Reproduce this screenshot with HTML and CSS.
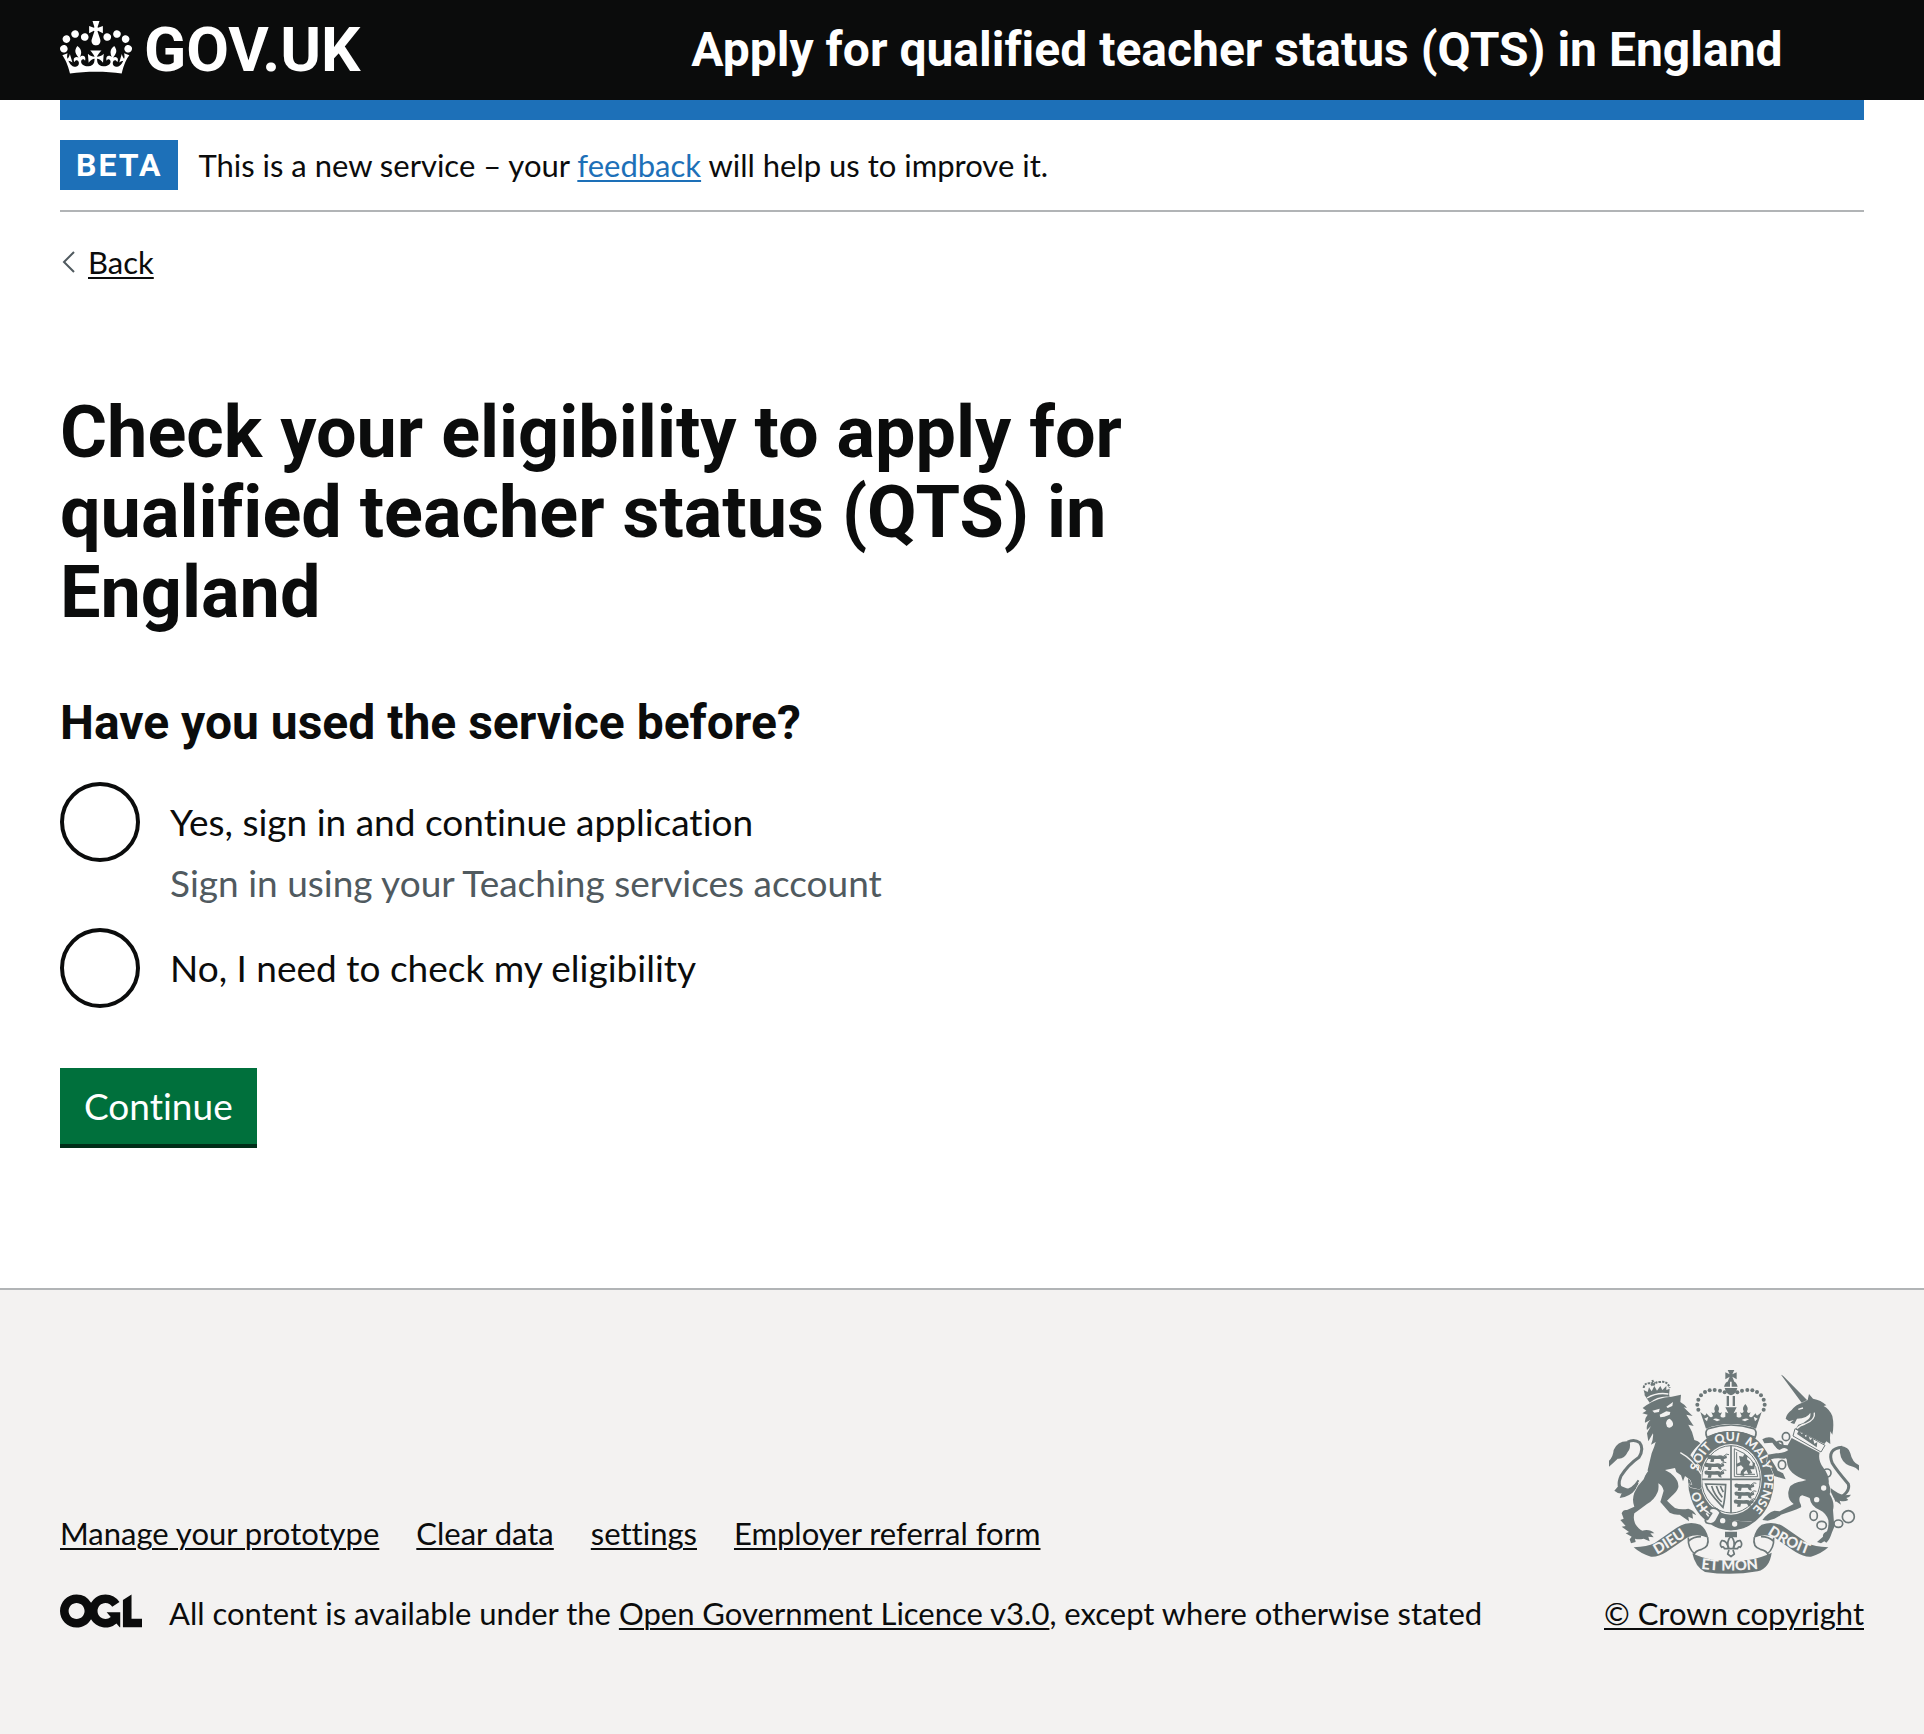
FILE: index.html
```html
<!DOCTYPE html>
<html lang="en">
<head>
<meta charset="utf-8">
<meta name="viewport" content="width=device-width, initial-scale=1">
<title>Check your eligibility – Apply for qualified teacher status (QTS) in England</title>
<link rel="stylesheet" href="styles.css">
</head>
<body>
<header class="header">
  <div class="header-row">
    <a class="logo" href="#">
      <svg class="logo-crown" viewBox="0 0 132 97" aria-hidden="true"><path fill="currentColor" fill-rule="evenodd" d="M25 30.2c3.5 1.5 7.7-.2 9.1-3.7 1.5-3.6-.2-7.8-3.9-9.2-3.6-1.4-7.6.3-9.1 3.9-1.4 3.5.3 7.5 3.9 9zM9 39.5c3.6 1.5 7.8-.2 9.2-3.7 1.5-3.6-.2-7.8-3.9-9.1-3.6-1.5-7.6.2-9.1 3.8-1.4 3.5.3 7.5 3.8 9zM4.4 57.2c3.5 1.5 7.7-.2 9.1-3.8 1.5-3.6-.2-7.7-3.9-9.1-3.5-1.5-7.6.3-9.1 3.8-1.4 3.5.3 7.6 3.9 9.1zm38.3-21.4c3.5 1.5 7.7-.2 9.1-3.8 1.5-3.6-.2-7.7-3.9-9.1-3.6-1.5-7.6.3-9.1 3.8-1.3 3.6.4 7.7 3.9 9.1zm64.4-5.6c-3.6 1.5-7.8-.2-9.1-3.7-1.5-3.6.2-7.8 3.8-9.2 3.6-1.4 7.7.3 9.2 3.9 1.3 3.5-.4 7.5-3.9 9zm15.9 9.3c-3.6 1.5-7.7-.2-9.1-3.7-1.5-3.6.2-7.8 3.7-9.1 3.6-1.5 7.7.2 9.2 3.8 1.5 3.5-.3 7.5-3.8 9zm4.7 17.7c-3.6 1.5-7.8-.2-9.2-3.8-1.5-3.6.2-7.7 3.9-9.1 3.6-1.5 7.7.3 9.2 3.8 1.3 3.5-.4 7.6-3.9 9.1zM89.3 35.8c-3.6 1.5-7.8-.2-9.2-3.8-1.4-3.6.2-7.7 3.9-9.1 3.6-1.5 7.7.3 9.2 3.8 1.4 3.6-.3 7.7-3.9 9.1zM69.7 17.7l8.9 4.7V9.3l-8.9 2.8c-.2-.3-.5-.6-.9-.9L72.4 0H59.6l3.5 11.2c-.3.3-.6.5-.9.9l-8.8-2.8v13.1l8.8-4.7c.3.3.6.7.9.9l-5 15.4v.1c-.2.8-.4 1.6-.4 2.4 0 4.1 3.1 7.5 7 8.1h.2c.3 0 .7.1 1 .1.4 0 .7 0 1-.1h.2c4-.6 7.1-4.1 7.1-8.1 0-.8-.1-1.7-.4-2.4V34l-5.1-15.4c.4-.2.7-.6 1-.9zM66 92.8c16.9 0 32.8 1.1 47.1 3.2 4-16.9 8.9-26.7 14-33.5l-9.6-3.4c1 4.9 1.1 7.2 0 10.2-1.5-1.4-3-4.3-4.2-8.7L108.6 76c2.8-2 5-3.2 7.5-3.3-4.4 9.4-10 11.9-13.6 11.2-4.3-.8-6.3-4.6-5.6-7.9 1-4.7 5.7-5.9 8-.5 4.3-8.7-3-11.4-7.6-8.8 7.1-7.2 7.9-13.5 2.1-21.1-8 6.1-8.1 12.3-4.5 20.8-4.7-5.4-12.1-2.5-9.5 6.2 3.4-5.2 7.9-2 7.2 3.1-.6 4.3-6.4 7.8-13.5 7.2-10.3-.9-10.9-8-11.2-13.8 2.5-.5 7.1 1.8 11 7.3L80.2 60c-4.1 4.4-8 5.3-12.3 5.4 1.4-4.4 8-11.6 8-11.6H55.5s6.4 7.2 7.9 11.6c-4.2-.1-8-1-12.3-5.4l1.4 16.4c3.9-5.5 8.5-7.7 10.9-7.3-.3 5.8-.9 12.8-11.1 13.8-7.2.6-12.9-2.9-13.5-7.2-.7-5 3.8-8.3 7.1-3.1 2.7-8.7-4.6-11.6-9.4-6.2 3.7-8.5 3.6-14.7-4.6-20.8-5.8 7.6-5 13.9 2.2 21.1-4.7-2.6-11.9.1-7.7 8.8 2.3-5.5 7.1-4.2 8.1.5.7 3.3-1.3 7.1-5.7 7.9-3.5.7-9-1.8-13.5-11.2 2.5.1 4.7 1.3 7.5 3.3l-4.7-15.4c-1.2 4.4-2.7 7.2-4.3 8.7-1.1-3-.9-5.3 0-10.2l-9.5 3.4c5 6.9 9.9 16.7 14 33.5 14.8-2.1 30.8-3.2 47.7-3.2z"/></svg>
      <span>GOV.UK</span>
    </a>
    <a class="service-name" href="#">Apply for qualified teacher status (QTS) in England</a>
  </div>
</header>

<div class="container">
  <div class="phase-banner">
    <strong class="tag">BETA</strong>
    <span>This is a new service – your <a class="link" href="#">feedback</a> will help us to improve it.</span>
  </div>
  <a class="back" href="#">
    <svg class="back-arrow" viewBox="0 0 16 24" aria-hidden="true"><path d="M14 2 4 12l10 10" fill="none" stroke="currentColor" stroke-width="2"/></svg>
    <span class="back-text">Back</span>
  </a>

  <main class="main">
    <h1 class="title">Check your eligibility to apply for qualified teacher status (QTS) in England</h1>
    <form>
      <fieldset class="question">
        <legend class="question-title">Have you used the service before?</legend>
        <div class="radios">
          <div class="radio-item">
            <input class="radio" type="radio" name="used" id="used-yes" value="yes" aria-describedby="used-yes-hint">
            <label class="radio-label" for="used-yes">Yes, sign in and continue application</label>
            <div class="hint" id="used-yes-hint">Sign in using your Teaching services account</div>
          </div>
          <div class="radio-item">
            <input class="radio" type="radio" name="used" id="used-no" value="no">
            <label class="radio-label" for="used-no">No, I need to check my eligibility</label>
          </div>
        </div>
      </fieldset>
      <button class="button" type="submit">Continue</button>
    </form>
  </main>
</div>

<footer class="footer">
  <div class="footer-row">
    <div class="footer-meta">
      <ul class="footer-links">
        <li><a href="#">Manage your prototype</a></li>
        <li><a href="#">Clear data</a></li>
        <li><a href="#">settings</a></li>
        <li><a href="#">Employer referral form</a></li>
      </ul>
      <div class="licence">
        <svg class="ogl" viewBox="0 0 483.2 195.7" aria-hidden="true"><path fill="currentColor" d="M421.5 142.8V.1l-50.7 32.3v161.1h112.4v-50.7zm-122.3-9.6A47.12 47.12 0 0 1 221 97.8c0-26 21.1-47.1 47.1-47.1 16.7 0 31.4 8.7 39.7 21.8l42.7-27.2A97.63 97.63 0 0 0 268.1 0c-36.5 0-68.3 20.1-85.1 49.7A98 98 0 0 0 97.8 0C43.9 0 0 43.9 0 97.8s43.9 97.8 97.8 97.8c36.5 0 68.3-20.1 85.1-49.7a97.76 97.76 0 0 0 149.6 25.4l19.4 22.2h3v-87.8h-80l24.3 27.5zM97.8 145c-26 0-47.1-21.1-47.1-47.1s21.1-47.1 47.1-47.1 47.1 21.1 47.1 47.1S123.8 145 97.8 145"/></svg>
        <span>All content is available under the <a href="#">Open Government Licence v3.0</a>, except where otherwise stated</span>
      </div>
    </div>
    <div class="copyright">
      <svg class="arms" viewBox="54 60 750 612" role="img" aria-label="Royal coat of arms">
        <defs>
          <path id="garter" d="M420 503A100 115 0 0 1 420 273A100 115 0 0 1 420 503"/>
          <path id="dieu" d="M198 614Q250 584 304 546"/>
          <path id="droit" d="M528 552Q588 592 660 616"/>
          <path id="mon" d="M330 656Q420 668 516 655"/>
          <g id="beast"><path d="M0 6Q6 0 12 4L30 5Q44 2 50 8L58 4 60 12 50 16 52 24 44 22 40 15 22 15 20 24 10 24 12 16 2 14Z"/><path d="M48 8Q60 -4 66 2" fill="none" stroke="#6c7778" stroke-width="3"/></g>
        </defs>

        <!-- garter and shield -->
        <ellipse cx="420" cy="390" rx="129" ry="151" class="ink"/>
        <ellipse cx="420" cy="388" rx="92" ry="106" class="paper"/>
        <ellipse cx="420" cy="388" rx="88" ry="101" class="line thin"/>
        <path class="line" d="M420 287V489M331 388H509"/>
        <g class="ink">
          <use href="#beast" x="348" y="312"/><use href="#beast" x="340" y="336"/><use href="#beast" x="340" y="359"/>
          <use href="#beast" x="430" y="398"/><use href="#beast" x="430" y="422"/><use href="#beast" x="428" y="446"/>
          <path d="M444 318l12 2 4-8 10 6-2 10 10 8-4 10 10 2 2-12 6 4-2 18-12 0 6 12-12 2-6-12-8 8 2 10-12-2 2-12 8-10-8-8-12 4-2-8 12-6z"/>
        </g>
        <path class="line thin" d="M430 296V380H500Q496 320 430 296M437 306V373H492"/>
        <path class="line" d="M344 402L404 404Q402 450 396 472Q372 448 350 418ZM362 408Q370 436 392 456M376 408Q382 428 394 442M388 408Q392 418 397 426"/>
        <path class="gap" d="M330 472Q390 520 482 516M346 490L366 516"/>
        <path class="ink" d="M362 484Q420 520 490 514Q450 544 410 540Q374 532 354 510Z"/>
        <circle class="paper" cx="395" cy="512" r="8"/><circle class="paper" cx="431" cy="522" r="8"/>
        <path class="buckle" d="M358 476Q350 486 362 490L350 508Q338 508 346 518 366 526 374 514L388 488Q376 470 358 476Z"/>

        <!-- imperial crown -->
        <path class="paper" d="M340 225H498L492 258Q420 228 348 258Z"/>
        <path class="line" d="M352 236Q420 214 488 236Q500 244 492 262Q420 230 348 262Q340 244 352 236Z"/>
        <path class="ink" d="M410 60H430L424 73 437 67V88L424 80 430 95H410L416 80 403 88V67L416 73ZM399 110Q402 94 417 92V110ZM422 92Q437 94 440 110H422ZM401 114H439Q434 134 420 136Q406 134 401 114ZM407 138H414V168H407ZM425 138H432V168H425Z"/>
        <g id="crown-half">
          <g class="ink"><circle cx="401" cy="127" r="6"/><circle cx="387" cy="122" r="6"/><circle cx="371" cy="120" r="6"/><circle cx="356" cy="121" r="6"/><circle cx="342" cy="126" r="6"/><circle cx="330" cy="136" r="6"/><circle cx="322" cy="149" r="6"/><circle cx="319" cy="164" r="6"/><circle cx="322" cy="179" r="6"/></g>
          <path class="ink" d="M420 172H403L412 190 403 186V200Q392 206 388 198L393 187Q384 192 382 184Q388 174 377 162Q366 174 372 184Q370 192 361 187L366 198Q360 206 354 198L346 190Q344 200 338 194L328 186 345 236Q380 222 420 222Z"/>
          <path class="paper" d="M340 206L352 200 348 214ZM366 208Q376 202 388 210L378 214Z"/>
        </g>
        <use href="#crown-half" transform="translate(840 0) scale(-1 1)"/>

        <!-- lion -->
        <g transform="translate(30 60)">
          <path class="line tail" d="M114 332Q92 366 66 362Q46 350 60 318Q82 284 114 262Q130 236 116 218Q100 206 80 216"/>
          <path class="ink" d="M86 214Q50 210 38 240Q36 262 24 272V290Q40 276 50 266Q70 268 80 246Q90 236 86 214ZM54 346L40 362Q52 372 62 370L56 384Q88 380 104 358L112 338 84 358Z"/>
          <path class="ink edge" d="M125 114L136 106Q170 82 212 80L240 74 238 96Q252 104 258 114L248 112Q262 126 275 138L256 134Q266 150 278 168L262 164Q276 186 280 210Q292 212 298 220Q276 240 268 256L298 290 302 350Q296 362 288 356L268 352 262 342 274 344 268 330 252 318 246 334 240 316 226 306 222 294 192 300Q206 306 218 318Q234 334 232 352Q228 366 210 380L198 392Q212 406 222 414Q240 420 262 416Q278 420 286 436L274 430 276 446 262 440 264 454 250 444 236 434Q222 436 206 428Q190 410 178 396Q184 376 188 362Q184 346 172 340Q174 356 170 366Q160 390 138 402Q114 420 100 430Q96 446 102 460Q112 478 124 482Q146 476 160 490L148 490 158 502 142 500 146 514 128 506Q112 510 102 506L104 516 90 520 86 508 92 500 74 490 84 486 62 470 74 468 58 450 68 446 62 430Q66 418 78 420L100 410Q92 390 100 368Q110 346 128 328Q134 312 140 300L152 250Q160 232 164 216L150 224Q158 204 156 190L142 214 138 190 150 168 138 180Q134 164 148 150L132 158Q130 146 140 134L124 130 136 122Z"/>
          <path class="paper" d="M154 122L176 116 174 126 160 128ZM196 110L216 96 214 108 200 114ZM176 134L196 124 208 126 206 134 190 140 178 142ZM195 160Q196 148 206 146Q218 154 216 166Q208 178 198 170Z"/>
          <path class="gap thin" d="M238 248Q276 268 300 312M140 302Q120 330 112 340"/>
          <path class="ink" d="M130 74Q160 56 202 66L206 80Q172 76 146 98Z"/>
          <path class="ink" d="M132 76L128 60 140 66 144 52 152 64 160 48 168 62 178 48 184 60 196 48 196 60 206 56 204 76Z"/>
          <path class="line dots" d="M128 54Q130 38 148 40L156 48Q160 36 178 36Q200 32 206 54M150 40L162 38M154 30L160 46"/>
          <path class="gap thin" d="M138 84Q168 66 202 72"/>
        </g>

        <!-- unicorn -->
        <g transform="translate(510 60)">
          <path class="line tail" d="M222 392Q270 368 262 342Q226 300 214 280Q196 236 244 232"/>
          <path class="ink" d="M238 228Q264 230 268 250Q274 278 294 286V302Q284 292 276 290Q250 286 240 262Q234 246 238 228ZM206 352Q214 392 240 404L236 392Q250 396 262 390L256 384Q266 382 270 374L250 376Q230 372 206 352Z"/>
          <path class="ink" d="M60 14L66 17 138 90 122 98ZM74 146Q76 132 92 120Q104 104 124 98L140 90 144 72 156 86Q180 90 196 106L188 108Q206 118 214 138Q220 165 214 194L208 184Q206 206 208 222L196 214 190 222 104 178 112 164Q130 160 142 148Q150 140 148 128Q140 144 108 146L100 162 88 158 98 150 84 154Z"/>
          <path class="gap thin" d="M160 128Q164 150 132 162Q116 166 108 176M112 118L126 114"/>
          <path class="ink edge" d="M92 204L176 248Q170 268 186 292Q206 318 203 340Q212 362 206 372Q222 398 216 420L220 470Q214 484 212 490Q206 510 196 518L190 514 180 520 168 516 186 500Q184 490 198 484Q204 470 202 450Q196 430 176 420Q150 410 146 384Q130 378 124 376Q112 378 116 396Q122 408 120 412Q96 424 60 434Q50 442 40 446L20 452 4 450Q20 428 40 422L56 424 98 402Q80 390 82 366Q84 342 112 336Q124 334 136 330Q110 322 94 308Q80 296 78 276Q78 262 70 266Q44 262 30 268Q44 290 50 302L66 310 74 328 60 324 40 318Q34 296 18 276L20 254 46 250Q74 248 82 240Q70 228 56 240Q46 236 34 218L10 220 4 208Q20 198 36 204Q46 216 58 222Q70 226 80 226Z"/>
          <path class="collar" d="M102 176L192 226 180 246 96 198Z"/>
          <path class="ink" d="M108 192l6-12 8 12 9-5 2 14 9-5 5 14 9-5 4 16 9-5-2 16z"/>
          <g class="line"><ellipse cx="75" cy="200" rx="11" ry="12"/><ellipse cx="56" cy="224" rx="9" ry="10"/><ellipse cx="63" cy="284" rx="11" ry="13"/><circle cx="198" cy="309" r="12"/><ellipse cx="158" cy="437" rx="11" ry="14"/><ellipse cx="182" cy="466" rx="14" ry="12"/><ellipse cx="232" cy="461" rx="13" ry="11"/><circle cx="262" cy="440" r="18"/></g>
          <circle class="paper" cx="188" cy="354" r="8"/><circle class="paper" cx="167" cy="389" r="8"/>
        </g>

        <!-- ribbon -->
        <g id="ribbon-half">
          <path class="ink" d="M128 592Q170 590 190 580L256 534Q290 510 328 524Q346 536 352 564Q320 548 290 562Q250 590 226 606Q200 622 180 620Q150 612 128 592Z"/>
          <path class="line" d="M292 562Q290 596 312 612M350 562Q356 590 332 598Q312 602 308 616M292 574Q306 560 330 560"/>
        </g>
        <use href="#ribbon-half" transform="translate(840 0) scale(-1 1)"/>
        <path class="ink" d="M304 610Q330 624 370 630Q420 634 470 630Q510 624 542 608Q536 654 500 664Q420 678 342 666Q312 650 304 610ZM402 545H438V562H402Z"/>
        <path class="fleur" d="M420 558Q404 576 414 596H426Q436 576 420 558ZM412 596Q408 570 392 572Q384 582 392 592Q398 588 400 596H440Q442 588 448 592Q456 582 448 572Q432 570 428 596M414 600L410 612 420 620 430 612 426 600"/>
        <g class="motto small">
          <text><textPath href="#garter" startOffset="76">HO</textPath></text>
          <text><textPath href="#garter" startOffset="193">SOIT</textPath></text>
          <text><textPath href="#garter" startOffset="292">QUI</textPath></text>
          <text><textPath href="#garter" startOffset="378">MALY</textPath></text>
          <text><textPath href="#garter" startOffset="490">PENSE</textPath></text>
        </g>
        <g class="motto">
          <text><textPath href="#dieu">DIEU</textPath></text>
          <text><textPath href="#droit">DROIT</textPath></text>
          <text><textPath href="#mon">ET MON</textPath></text>
        </g>
      </svg>
      <a href="#">© Crown copyright</a>
    </div>
  </div>
</footer>
</body>
</html>
```
FILE: styles.css
```css
* { box-sizing: border-box; }

body {
  margin: 0;
  min-height: 100vh;
  display: flex;
  flex-direction: column;
  background: #fff;
  color: #0b0c0c;
  font-family: Lato, "Liberation Sans", sans-serif;
  font-size: 31px;
  font-variant-ligatures: none;
  line-height: 40px;
}

a {
  color: inherit;
  text-decoration-thickness: 2px;
  text-underline-offset: 3px;
}

/* Bold display type */
.logo,
.service-name,
.tag,
.title,
.question-title {
  font-family: Roboto, "Liberation Sans", sans-serif;
  font-weight: 700;
}

/* Header */
.header {
  padding: 0 60px;
  background: linear-gradient(#0b0c0c 100px, #fff 100px);
  color: #fff;
}
.header-row {
  display: grid;
  grid-template-columns: 1fr 2fr;
  align-items: center;
  height: 120px;
  border-bottom: 20px solid #1d70b8;
}
.logo {
  display: flex;
  align-items: center;
  gap: 12px;
  font-size: 62px;
  line-height: 60px;
  text-decoration: none;
}
.logo-crown { width: 72px; height: 53px; margin-bottom: 5px; }
.service-name {
  padding-left: 30px;
  font-size: 48px;
  line-height: 60px;
  text-decoration: none;
}

/* Page */
.container { padding: 0 60px; }
.phase-banner {
  display: flex;
  align-items: center;
  gap: 20px;
  padding: 20px 0;
  border-bottom: 2px solid #b1b4b6;
  line-height: 50px;
}
.tag {
  padding: 0 16px;
  background: #1d70b8;
  color: #fff;
  font-size: 32px;
  letter-spacing: 2px;
}
.link { color: #1d70b8; }
.back {
  display: inline-flex;
  align-items: center;
  gap: 12px;
  margin: 30px 0 28px;
  text-decoration: none;
}
.back-arrow { width: 16px; height: 24px; color: #505a5f; }
.back-text {
  text-decoration: underline;
  text-decoration-thickness: 2px;
  text-underline-offset: 3px;
}

.main { padding: 83px 0 140px; }
.title {
  max-width: 66%;
  margin: 0 0 60px;
  font-size: 72px;
  line-height: 80px;
}
.question { margin: 0 0 60px; padding: 0; border: 0; }
.question-title {
  margin-bottom: 29px;
  padding: 0;
  font-size: 48px;
  line-height: 60px;
}
.radios {
  display: flex;
  flex-direction: column;
  gap: 20px;
  font-size: 37px;
  line-height: 50px;
}
.radio-item {
  display: grid;
  grid-template-columns: 80px 1fr;
  grid-template-rows: 76px auto;
  column-gap: 30px;
}
.radio {
  grid-row: 1 / 3;
  width: 80px;
  height: 80px;
  margin: 0;
  appearance: none;
  border: 4px solid #0b0c0c;
  border-radius: 50%;
  background: #fff;
}
.radio:checked { background: radial-gradient(#0b0c0c 20px, #fff 21px); }
.radio-label { grid-column: 2; padding-top: 15px; }
.hint { grid-column: 2; color: #505a5f; }
.button {
  display: block;
  margin: 0 0 4px;
  padding: 13px 24px;
  border: 0;
  background: #00703c;
  box-shadow: 0 4px 0 #002d18;
  color: #fff;
  font-family: inherit;
  font-size: 37px;
  font-variant-ligatures: none;
  line-height: 50px;
}

/* Footer */
.footer {
  flex: 1;
  padding: 80px 60px 60px;
  border-top: 2px solid #b1b4b6;
  background: #f3f2f1;
}
.footer-row {
  display: flex;
  justify-content: space-between;
  align-items: flex-end;
  gap: 60px;
}
.footer-links {
  display: flex;
  flex-wrap: wrap;
  gap: 37px;
  margin: 0 0 40px;
  padding: 0;
  list-style: none;
}
.licence { display: flex; align-items: center; gap: 27px; }
.ogl { flex: none; width: 82px; height: 34px; margin-bottom: 5px; }
.copyright {
  display: flex;
  flex-direction: column;
  align-items: center;
  gap: 19px;
  white-space: nowrap;
}

/* Coat of arms */
.arms { width: 250px; height: 204px; }
.ink { fill: #6c7778; }
.paper { fill: #f3f2f1; }
.line { fill: none; stroke: #6c7778; stroke-width: 5; }
.line.thin { stroke-width: 3; }
.line.tail { stroke-width: 9; }
.line.dots { stroke-width: 6; stroke-dasharray: 7 3; }
.edge { stroke: #f3f2f1; stroke-width: 3; paint-order: stroke; }
.gap { fill: none; stroke: #f3f2f1; stroke-width: 5; }
.gap.thin { stroke-width: 4; }
.buckle { fill: #f3f2f1; stroke: #6c7778; stroke-width: 5; stroke-linejoin: round; }
.collar { fill: #f3f2f1; stroke: #6c7778; stroke-width: 3; }
.fleur { fill: #f3f2f1; stroke: #6c7778; stroke-width: 5; stroke-linejoin: round; }
.motto { fill: #f3f2f1; font-size: 44px; font-weight: 900; }
.motto.small { font-size: 37px; }
```
